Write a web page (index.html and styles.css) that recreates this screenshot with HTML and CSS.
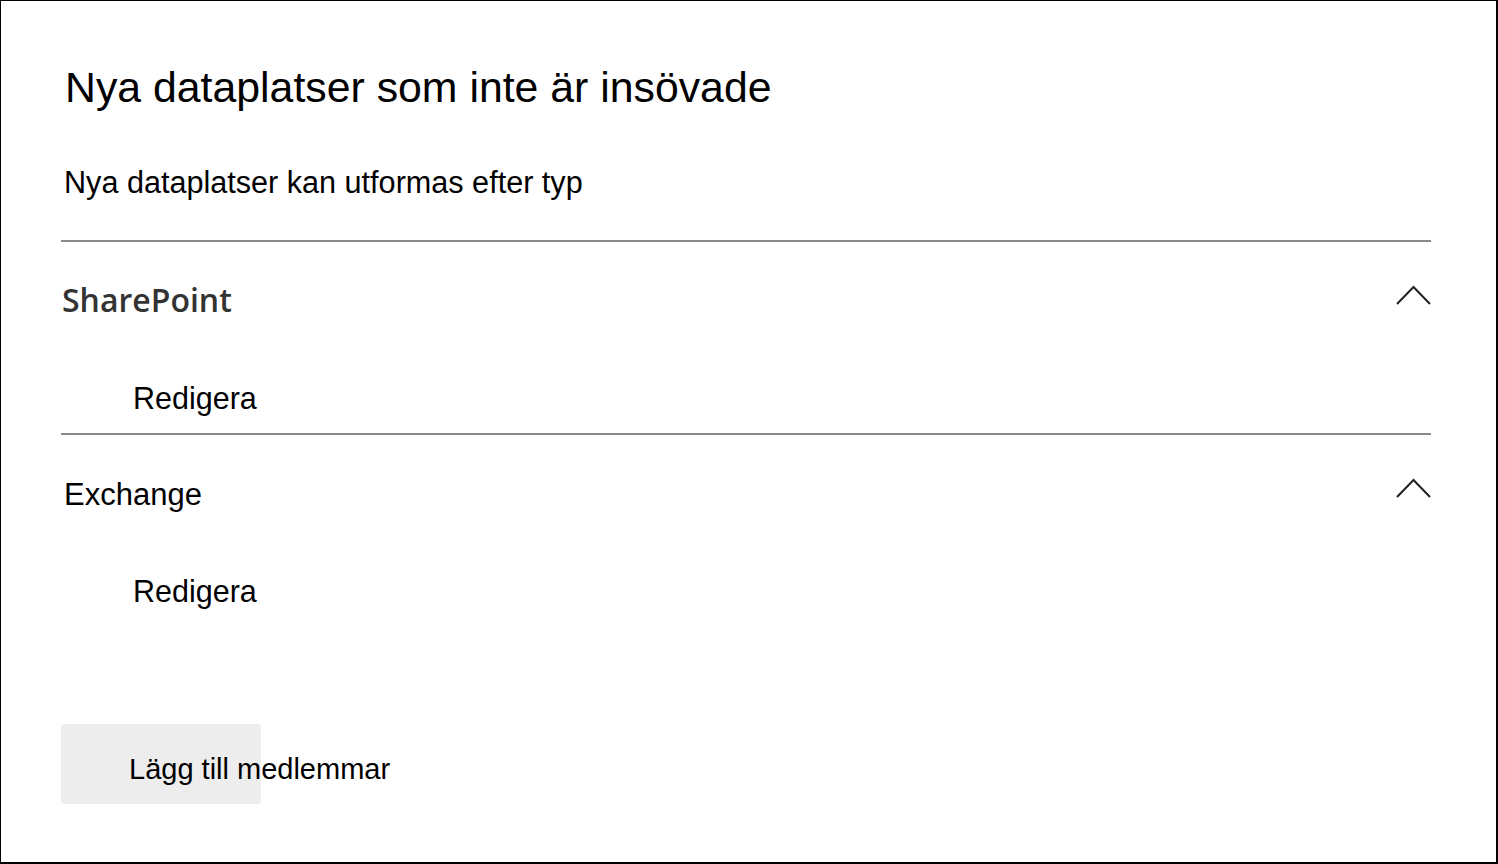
FILE: index.html
```html
<!DOCTYPE html>
<html lang="sv">
<head>
<meta charset="utf-8">
<title>Nya dataplatser</title>
<link rel="stylesheet" href="styles.css">
</head>
<body>
<div class="frame">
  <h1 class="title">Nya dataplatser som inte är insövade</h1>
  <p class="subtitle">Nya dataplatser kan utformas efter typ</p>
  <section class="group first">
    <div class="group-head">
      <h2 class="group-title sp">SharePoint</h2>
      <svg class="chev" width="35" height="20" viewBox="0 0 35 20"><polyline points="1,19 17.5,2 34,19" fill="none" stroke="#222" stroke-width="2"/></svg>
    </div>
    <div class="edit">Redigera</div>
  </section>
  <section class="group">
    <div class="group-head">
      <h2 class="group-title ex">Exchange</h2>
      <svg class="chev" width="35" height="20" viewBox="0 0 35 20"><polyline points="1,19 17.5,2 34,19" fill="none" stroke="#222" stroke-width="2"/></svg>
    </div>
    <div class="edit">Redigera</div>
  </section>
  <div class="actions">
    <button class="btn" type="button">Lägg till medlemmar</button>
  </div>
</div>
</body>
</html>
```
FILE: styles.css
```css
html, body {
  margin: 0;
  padding: 0;
  background: #fff;
}
.frame {
  box-sizing: border-box;
  width: 1498px;
  height: 864px;
  border: 1px solid #000;
  border-right-width: 2px;
  border-bottom-width: 2px;
  padding: 61px 65px 0 60px;
  font-family: "Liberation Sans", Arial, sans-serif;
  color: #000;
}
.title {
  margin: 0 0 0 4px;
  font-size: 42.8px;
  line-height: 50px;
  font-weight: 400;
}
.subtitle {
  margin: 52px 0 0 3px;
  font-size: 30.6px;
  line-height: 36px;
}
.group {
  border-top: 2px solid #8a8a8a;
}
.first {
  margin-top: 40px;
}
.group-head {
  display: flex;
  justify-content: space-between;
  align-items: flex-start;
}
.group-title {
  margin: 0;
  font-weight: 400;
}
.sp {
  font-family: "Open Sans", sans-serif;
  font-weight: 600;
  font-size: 32px;
  line-height: 40px;
  color: #333;
  margin-top: 38px;
  margin-left: 1px;
}
.ex {
  font-size: 31px;
  line-height: 36px;
  margin-top: 42px;
  margin-left: 3px;
}
.chev {
  margin-top: 43px;
}
.edit {
  margin: 60px 0 0 72px;
  font-size: 30.5px;
  line-height: 36px;
  padding-bottom: 17px;
}
.actions {
  margin-top: 98px;
}
.btn {
  display: block;
  box-sizing: border-box;
  width: 200px;
  height: 80px;
  margin: 0;
  border: 0;
  border-radius: 4px;
  background: #ededed;
  padding: 10px 0 0 68px;
  text-align: left;
  white-space: nowrap;
  overflow: visible;
  font-family: "Liberation Sans", Arial, sans-serif;
  font-size: 29px;
  line-height: 34px;
  color: #000;
}
```
